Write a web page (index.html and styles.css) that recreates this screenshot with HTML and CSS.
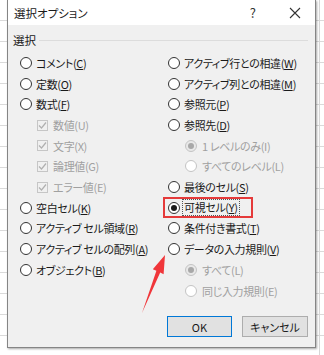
FILE: index.html
```html
<!DOCTYPE html>
<html lang="ja">
<head>
<meta charset="utf-8">
<link rel="stylesheet" href="styles.css">
</head>
<body>
<div class="screen">
  <div class="dialog">
    <div class="titlebar">
      <span class="title">選択オプション</span>
      <span class="help">?</span>
      <svg class="close" width="12" height="12" viewBox="0 0 12 12"><path d="M1 1L11 11M11 1L1 11" stroke="#333" stroke-width="1.1" fill="none"/></svg>
    </div>
    <div class="content">
      <div class="group-label"><span>選択</span><span class="rule"></span></div>
      <div class="cols">
        <div class="col col-left">
          <div class="opt"><span class="radio"></span><span class="label">コメント(<u>C</u>)</span></div>
          <div class="opt"><span class="radio"></span><span class="label">定数(<u>O</u>)</span></div>
          <div class="opt"><span class="radio"></span><span class="label">数式(<u>F</u>)</span></div>
          <div class="opt sub disabled"><span class="check"><svg width="11" height="11" viewBox="0 0 11 11"><path d="M2 5.5L4.5 8L9 2.5" stroke="#b0b0b0" stroke-width="1.2" fill="none"/></svg></span><span class="label">数値(U)</span></div>
          <div class="opt sub disabled"><span class="check"><svg width="11" height="11" viewBox="0 0 11 11"><path d="M2 5.5L4.5 8L9 2.5" stroke="#b0b0b0" stroke-width="1.2" fill="none"/></svg></span><span class="label">文字(X)</span></div>
          <div class="opt sub disabled"><span class="check"><svg width="11" height="11" viewBox="0 0 11 11"><path d="M2 5.5L4.5 8L9 2.5" stroke="#b0b0b0" stroke-width="1.2" fill="none"/></svg></span><span class="label">論理値(G)</span></div>
          <div class="opt sub disabled"><span class="check"><svg width="11" height="11" viewBox="0 0 11 11"><path d="M2 5.5L4.5 8L9 2.5" stroke="#b0b0b0" stroke-width="1.2" fill="none"/></svg></span><span class="label">エラー値(E)</span></div>
          <div class="opt"><span class="radio"></span><span class="label">空白セル(<u>K</u>)</span></div>
          <div class="opt"><span class="radio"></span><span class="label">アクティブ セル領域(<u>R</u>)</span></div>
          <div class="opt"><span class="radio"></span><span class="label">アクティブ セルの配列(<u>A</u>)</span></div>
          <div class="opt"><span class="radio"></span><span class="label">オブジェクト(<u>B</u>)</span></div>
        </div>
        <div class="col col-right">
          <div class="opt"><span class="radio"></span><span class="label">アクティブ行との相違(<u>W</u>)</span></div>
          <div class="opt"><span class="radio"></span><span class="label">アクティブ列との相違(<u>M</u>)</span></div>
          <div class="opt"><span class="radio"></span><span class="label">参照元(<u>P</u>)</span></div>
          <div class="opt"><span class="radio"></span><span class="label">参照先(<u>D</u>)</span></div>
          <div class="opt sub disabled"><span class="radio checked"></span><span class="label">1 レベルのみ(I)</span></div>
          <div class="opt sub disabled"><span class="radio"></span><span class="label">すべてのレベル(L)</span></div>
          <div class="opt"><span class="radio"></span><span class="label">最後のセル(<u>S</u>)</span></div>
          <div class="opt highlight"><span class="radio checked"></span><span class="label focus">可視セル(<u>Y</u>)</span><span class="mark"></span></div>
          <div class="opt"><span class="radio"></span><span class="label">条件付き書式(<u>T</u>)</span></div>
          <div class="opt"><span class="radio"></span><span class="label">データの入力規則(<u>V</u>)</span></div>
          <div class="opt sub disabled"><span class="radio checked"></span><span class="label">すべて(L)</span></div>
          <div class="opt sub disabled"><span class="radio"></span><span class="label">同じ入力規則(E)</span></div>
        </div>
      </div>
      <div class="buttons">
        <button class="btn btn-ok">OK</button>
        <button class="btn">キャンセル</button>
      </div>
    </div>
  </div>
  <svg class="arrow" width="324" height="355" viewBox="0 0 324 355">
    <polygon points="142,313 156.4,270.8 152.8,269.2 165,255 163.6,274.2 160.2,272.4" fill="#f0363a"/>
  </svg>
</div>
</body>
</html>
```

FILE: styles.css
```css
* { box-sizing: border-box; }
html, body { margin: 0; padding: 0; }
body {
  background: #fff;
  font-family: "Noto Sans CJK JP", "Noto Sans", sans-serif;
  font-size: 11px;
  color: #1a1a1a;
}
.screen {
  position: relative;
  width: 324px;
  height: 355px;
  overflow: hidden;
  background:
    linear-gradient(to right, transparent 319px, #d6d6d6 319px, #d6d6d6 320px, transparent 320px),
    repeating-linear-gradient(to bottom, transparent 0, transparent 20px, #dadada 20px, #dadada 21px),
    #fff;
}
.dialog {
  margin-left: 7px;
  width: 309px;
  height: 348px;
  display: flex;
  flex-direction: column;
  background: #f0f0f0;
  border: 1px solid #858585;
  border-top: 0;
  box-shadow: 1px 1px 2px rgba(0,0,0,0.35);
}
.titlebar {
  height: 25px;
  background: #fff;
  display: flex;
  align-items: center;
  padding-left: 6px;
  font-feature-settings: "palt";
}
.title { font-size: 11.5px; color: #1a1a1a; flex: 1; }
.help { font-size: 13px; color: #333; margin-right: 33px; }
.close { margin-right: 14px; }
.content {
  flex: 1;
  display: flex;
  flex-direction: column;
  padding: 0 7px 10px 0;
}
.group-label {
  display: flex;
  align-items: center;
  height: 16px;
  margin-top: 7px;
  margin-left: 5px;
  font-size: 11.5px;
}
.group-label .rule {
  flex: 1;
  height: 1px;
  background: #dcdcdc;
  margin-left: 3px;
}
.cols {
  display: flex;
  margin-top: 4.6px;
  padding-left: 12px;
}
.col { display: flex; flex-direction: column; }
.col-left { width: 148px; }
.col-right { flex: 1; }
.opt {
  position: relative;
  height: 20.7px;
  display: flex;
  align-items: center;
  gap: 4px;
  font-feature-settings: "palt";
  white-space: nowrap;
}
.label { letter-spacing: -0.35px; }
.opt u { text-decoration: underline; text-underline-offset: 1px; }
.opt.sub { padding-left: 17px; gap: 5px; }
.radio {
  width: 12px;
  height: 12px;
  border-radius: 50%;
  border: 1px solid #333;
  background: #fff;
  display: flex;
  align-items: center;
  justify-content: center;
  flex: none;
}
.radio.checked::after {
  content: "";
  width: 6px;
  height: 6px;
  border-radius: 50%;
  background: #1a1a1a;
}
.disabled { color: #a0a0a0; }
.disabled .radio { border-color: #c4c4c4; background: #fff; }
.disabled .radio.checked { background: #e8e8e8; }
.disabled .radio.checked::after { background: #a8a8a8; }
.check {
  width: 11px;
  height: 11px;
  border: 1px solid #c6c6c6;
  background: #f0f0f0;
  display: flex;
  align-items: center;
  justify-content: center;
  flex: none;
}
.check svg { flex: none; }
.label.focus {
  outline: 1px dotted #555;
  outline-offset: 0;
  padding: 0 1px;
  margin-left: -1px;
  line-height: 15px;
}
.mark {
  position: absolute;
  left: -5px;
  top: 0;
  width: 90px;
  height: 21px;
  border: 2px solid #e53a3a;
}
.buttons {
  margin-top: auto;
  display: flex;
  justify-content: flex-end;
  gap: 10px;
}
.btn {
  height: 21px;
  width: 66px;
  font-family: inherit;
  font-size: 11px;
  color: #1a1a1a;
  background: #e1e1e1;
  border: 1px solid #adadad;
  padding: 0;
  font-feature-settings: "palt";
}
.btn-ok { width: 65px; border-color: #0078d7; }
.arrow { position: absolute; left: 0; top: 0; pointer-events: none; }
```
